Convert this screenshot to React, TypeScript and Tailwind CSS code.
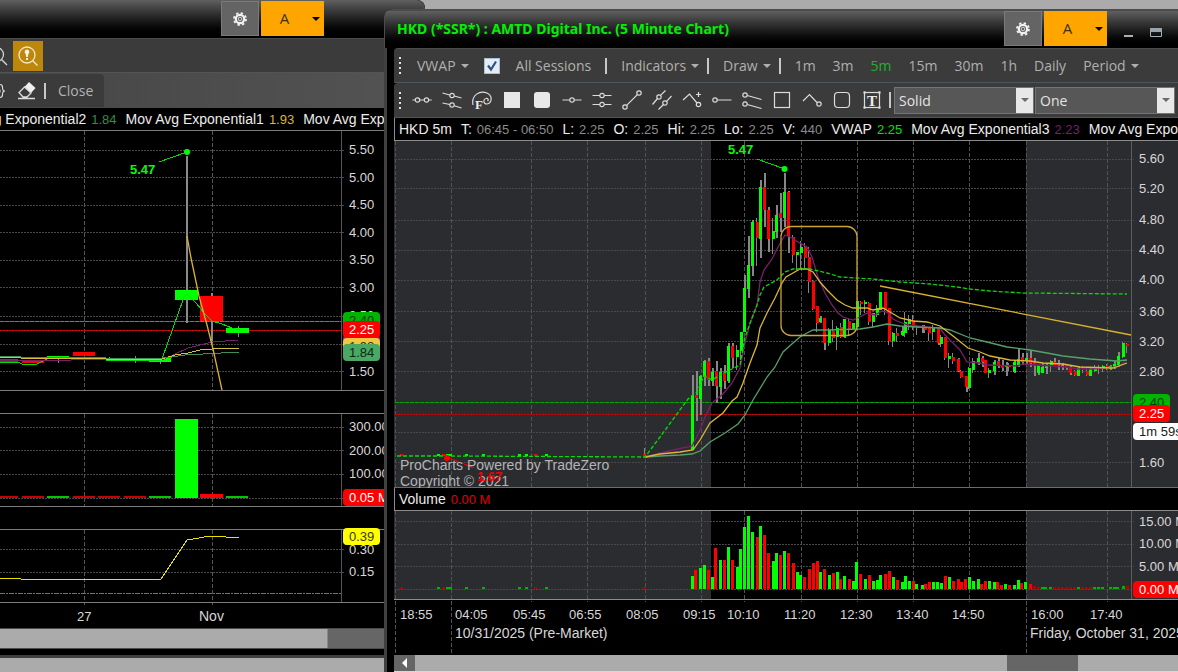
import type { ReactNode } from "react";

type Tone = "g" | "r";
type Candle = [number, number, number, number, number, Tone];

const GREEN = "#00ff00";
const RED = "#ff0000";
const fillOf = (t: Tone) => (t === "g" ? GREEN : RED);

/* x, wick top, wick bottom, body top, body bottom, direction */
const candles: Candle[] = [
  [692, 375, 450, 395, 450, "g"], [696, 371, 421, 395, 398, "r"], [700, 375, 415, 376, 399, "g"],
  [704, 360, 386, 361, 377, "g"], [708, 358, 386, 361, 380, "r"], [712, 368, 386, 372, 381, "g"],
  [716, 361, 403, 371, 386, "r"], [720, 368, 399, 372, 387, "g"], [724, 365, 389, 372, 381, "r"],
  [728, 343, 383, 346, 381, "g"], [732, 343, 368, 346, 358, "r"], [737, 345, 370, 350, 357, "g"],
  [741, 332, 360, 332, 351, "g"], [744, 275, 332, 288, 332, "g"], [748, 236, 298, 265, 289, "g"],
  [752, 220, 276, 222, 266, "g"], [757, 218, 266, 222, 238, "r"], [760, 180, 258, 187, 239, "g"],
  [764, 173, 227, 187, 210, "r"], [768, 207, 252, 210, 239, "r"], [773, 218, 254, 231, 239, "g"],
  [776, 205, 238, 215, 232, "g"], [780, 193, 232, 213, 218, "r"], [784, 173, 227, 192, 218, "g"],
  [788, 191, 253, 192, 236, "r"], [793, 235, 263, 237, 255, "r"], [797, 252, 270, 252, 255, "g"],
  [801, 241, 268, 247, 253, "g"], [805, 243, 269, 247, 258, "r"], [809, 247, 293, 257, 282, "r"],
  [813, 280, 310, 281, 309, "r"], [817, 306, 332, 306, 323, "r"], [820, 316, 323, 318, 322, "g"],
  [824, 318, 350, 318, 343, "r"], [829, 328, 346, 330, 343, "g"], [833, 320, 342, 331, 338, "r"],
  [837, 326, 350, 328, 337, "g"], [841, 323, 338, 327, 337, "r"], [844, 319, 338, 319, 337, "g"],
  [849, 319, 335, 321, 330, "r"], [853, 323, 330, 323, 329, "g"], [857, 301, 327, 301, 327, "g"],
  [861, 301, 315, 302, 304, "r"], [865, 300, 313, 302, 304, "g"], [869, 302, 325, 303, 322, "r"],
  [873, 313, 327, 313, 322, "g"], [877, 305, 317, 308, 315, "g"], [880, 292, 310, 292, 310, "g"],
  [885, 292, 315, 292, 310, "r"], [889, 308, 345, 308, 341, "r"], [893, 332, 347, 333, 341, "g"],
  [897, 328, 342, 333, 336, "r"], [902, 326, 336, 331, 335, "g"], [905, 312, 337, 322, 333, "g"],
  [909, 315, 330, 319, 324, "g"], [913, 315, 330, 320, 327, "r"], [917, 325, 335, 327, 328, "r"],
  [922, 325, 333, 327, 328, "g"], [925, 325, 333, 327, 330, "r"], [929, 327, 341, 328, 333, "r"],
  [933, 325, 340, 327, 332, "g"], [938, 328, 345, 328, 343, "r"], [941, 335, 347, 337, 344, "g"],
  [945, 337, 360, 337, 358, "r"], [949, 353, 368, 356, 359, "g"], [953, 353, 364, 357, 361, "r"],
  [958, 358, 372, 359, 371, "r"], [961, 370, 378, 371, 377, "r"], [966, 376, 392, 376, 387, "r"],
  [969, 367, 389, 368, 388, "g"], [973, 358, 373, 361, 370, "g"], [978, 353, 365, 358, 363, "g"],
  [982, 356, 367, 358, 362, "r"], [985, 360, 373, 360, 373, "r"], [989, 368, 378, 370, 373, "g"],
  [994, 360, 375, 362, 371, "g"], [998, 358, 368, 361, 365, "r"], [1002, 360, 371, 365, 368, "r"],
  [1006, 362, 376, 365, 367, "g"], [1009, 363, 371, 365, 367, "r"], [1014, 360, 373, 362, 372, "g"],
  [1018, 348, 367, 359, 365, "g"], [1022, 353, 365, 357, 362, "r"], [1026, 353, 365, 358, 360, "g"],
  [1030, 350, 367, 358, 363, "r"], [1034, 358, 376, 362, 366, "r"], [1038, 365, 375, 365, 373, "g"],
  [1042, 363, 373, 367, 373, "g"], [1046, 363, 374, 366, 368, "g"], [1051, 360, 372, 361, 365, "g"],
  [1054, 358, 365, 362, 365, "r"], [1058, 360, 370, 363, 365, "r"], [1062, 363, 370, 365, 367, "g"],
  [1066, 364, 370, 365, 368, "r"], [1070, 365, 375, 367, 373, "r"], [1075, 370, 376, 371, 375, "r"],
  [1078, 367, 376, 368, 376, "g"], [1083, 366, 373, 368, 370, "r"], [1087, 368, 376, 371, 375, "r"],
  [1090, 367, 376, 368, 376, "g"], [1095, 365, 372, 367, 371, "g"], [1099, 365, 374, 367, 369, "g"],
  [1103, 365, 372, 366, 369, "g"], [1107, 364, 370, 366, 368, "r"], [1110, 365, 370, 366, 369, "g"],
  [1114, 361, 369, 364, 368, "g"], [1118, 352, 367, 356, 365, "g"], [1123, 342, 358, 343, 357, "g"],
  [1127, 343, 353, 344, 346, "r"],
];

/* x, bar height, direction */
const volumes: [number, number, Tone][] = [
  [692, 13, "g"], [695, 19, "r"], [700, 21, "g"], [704, 24, "g"], [708, 19, "r"], [712, 12, "g"],
  [715, 41, "r"], [720, 29, "g"], [724, 29, "r"], [728, 42, "g"], [732, 29, "r"], [737, 22, "g"],
  [740, 40, "g"], [744, 62, "g"], [748, 73, "g"], [752, 57, "g"], [757, 52, "r"], [760, 63, "g"],
  [764, 54, "r"], [768, 36, "r"], [773, 28, "g"], [776, 36, "g"], [780, 34, "r"], [784, 38, "g"],
  [788, 36, "r"], [793, 26, "r"], [797, 17, "g"], [800, 14, "g"], [804, 12, "r"], [809, 20, "r"],
  [813, 26, "r"], [817, 28, "r"], [820, 17, "g"], [824, 20, "r"], [829, 14, "g"], [833, 16, "r"],
  [837, 17, "g"], [840, 10, "r"], [844, 13, "g"], [849, 10, "r"], [853, 8, "g"], [856, 27, "g"],
  [860, 15, "r"], [865, 10, "g"], [869, 14, "r"], [873, 8, "g"], [877, 9, "g"], [880, 14, "g"],
  [885, 15, "r"], [889, 18, "r"], [893, 12, "g"], [897, 9, "r"], [902, 7, "g"], [905, 13, "g"],
  [909, 8, "g"], [913, 8, "r"], [916, 5, "g"], [922, 4, "g"], [925, 5, "r"], [929, 7, "r"],
  [933, 7, "g"], [937, 7, "g"], [941, 6, "g"], [945, 13, "r"], [949, 12, "g"], [953, 8, "r"],
  [958, 10, "r"], [961, 7, "r"], [965, 10, "r"], [969, 12, "g"], [973, 8, "g"], [978, 10, "g"],
  [981, 5, "r"], [985, 8, "r"], [989, 8, "g"], [994, 7, "g"], [997, 7, "r"], [1001, 4, "r"],
  [1005, 5, "g"], [1009, 4, "r"], [1014, 4, "g"], [1018, 9, "g"], [1021, 6, "r"], [1025, 7, "g"],
  [1030, 5, "r"], [1034, 3, "r"], [1038, 2, "r"], [1042, 2, "g"], [1045, 2, "g"], [1050, 2, "g"],
  [1054, 2, "r"], [1058, 2, "r"], [1062, 2, "r"], [1066, 2, "r"], [1070, 2, "r"], [1074, 2, "r"],
  [1078, 2, "g"], [1082, 2, "r"], [1086, 2, "r"], [1090, 2, "r"], [1094, 2, "g"], [1098, 2, "g"],
  [1102, 2, "g"], [1110, 2, "g"], [1114, 2, "g"], [1117, 2, "g"], [1123, 3, "g"], [1127, 3, "r"],
];

/* sparse pre-market prints */
const prints: [number, Tone][] = [
  [401, "r"], [438, "g"], [443, "r"], [447, "g"], [450, "g"], [466, "g"], [483, "g"],
  [519, "g"], [526, "g"], [535, "r"], [546, "g"], [644, "r"],
];

const emaFast =
  "645,457 660,453 692,446 700,430 705,417 712,403 723,394 732,383 740,368 745,343 750,323 757,305 760,282 764,270 772,259 778,247 785,235 792,238 798,242 807,247 812,257 818,277 825,293 832,305 838,313 843,317 853,320 860,317 867,313 875,315 882,311 887,312 893,319 897,321 908,325 917,326 927,327 940,328 945,335 952,342 960,350 967,362 980,363 987,365 1017,366 1023,364 1037,365 1067,367 1077,369 1090,369 1117,367 1127,360";
const emaMid =
  "645,457 660,454 680,452 693,450 700,440 710,423 723,413 732,401 737,397 743,383 750,363 757,345 760,328 767,313 775,298 782,283 786,277 793,273 800,269 807,269 813,272 820,282 827,290 837,300 845,305 853,308 867,308 873,310 883,308 890,312 900,318 913,321 927,322 940,326 953,336 968,348 980,352 990,356 1010,360 1030,361 1043,363 1063,364 1080,367 1113,368 1127,363";
const emaSlow =
  "645,457 660,456 680,455 692,454 700,451 710,442 725,433 738,424 745,415 753,400 767,377 775,367 783,352 793,343 800,337 807,333 813,330 827,330 860,329 873,327 887,324 900,326 917,327 940,328 950,330 970,338 987,342 1007,347 1030,350 1047,353 1063,356 1090,359 1117,361 1127,360";
const vwap =
  "397,456 450,456 645,457 660,437 688,399 697,392 704,376 712,380 722,374 728,371 740,365 745,337 752,318 757,305 760,295 764,287 777,280 785,272 793,269 810,269 827,273 840,277 873,279 900,282 930,284 957,287 970,289 990,291 1023,293 1127,294";

const timeLines = [451, 531, 587, 645, 701, 744, 801, 857, 913, 969, 1026, 1107];

function Tag({ x, y, w, fill, ink, children }: { x: number; y: number; w: number; fill: string; ink: string; children: string }) {
  return (
    <g>
      <rect x={x} y={y} width={w} height={17} rx={4} fill={fill} />
      <text x={x + 6} y={y + 13} fill={ink}>{children}</text>
    </g>
  );
}

function GridH({ ys, x1, x2, color }: { ys: number[]; x1: number; x2: number; color: string }) {
  return (
    <g stroke={color} strokeDasharray="2 1" shapeRendering="crispEdges">
      {ys.map((y) => <line key={y} x1={x1} x2={x2} y1={y + 0.5} y2={y + 0.5} />)}
    </g>
  );
}

function GridV({ xs, y1, y2, color }: { xs: number[]; y1: number; y2: number; color: string }) {
  return (
    <g stroke={color} strokeDasharray="4 2" shapeRendering="crispEdges">
      {xs.map((x) => <line key={x} x1={x + 0.5} x2={x + 0.5} y1={y1} y2={y2} />)}
    </g>
  );
}

function LevelLine({ x1, x2, y, base, dash, pattern }: { x1: number; x2: number; y: number; base: string; dash: string; pattern: string }) {
  return (
    <g shapeRendering="crispEdges">
      <line x1={x1} x2={x2} y1={y + 0.5} y2={y + 0.5} stroke={base} />
      <line x1={x1} x2={x2} y1={y + 0.5} y2={y + 0.5} stroke={dash} strokeDasharray={pattern} />
    </g>
  );
}

function DailyChart() {
  return (
    <svg viewBox="0 130 384 498" preserveAspectRatio="xMinYMin meet" className="block h-[498px] w-full bg-black text-[13px]" role="img" aria-label="Daily chart">
      <GridH ys={[150, 177, 205, 232, 260, 287, 316, 344, 371, 427, 450, 474, 498, 549, 572]} x1={0} x2={344} color="#484848" />
      <GridV xs={[84, 212]} y1={131} y2={390} color="#565656" />
      <GridV xs={[84, 212]} y1={414} y2={506} color="#565656" />
      <GridV xs={[84, 212]} y1={530} y2={605} color="#565656" />
      <LevelLine x1={0} x2={341} y={321} base="#005800" dash="#00c800" pattern="4 1" />
      <LevelLine x1={0} x2={341} y={330} base="#500000" dash="#f00000" pattern="2 1" />
      <g shapeRendering="crispEdges" fill="none">
        <line x1={0} x2={341} y1={593.5} y2={593.5} stroke="#707070" strokeDasharray="5 1 2 1" />
        {[130.5, 390.5, 413.5, 506.5, 529.5, 602.5].map((y) => <line key={y} x1={0} x2={384} y1={y} y2={y} stroke="#7c7c7c" />)}
        <line x1={341.5} x2={341.5} y1={131} y2={390} stroke="#555" />
        <line x1={341.5} x2={341.5} y1={414} y2={506} stroke="#555" />
        <line x1={341.5} x2={341.5} y1={530} y2={602} stroke="#555" />
        <g fill="#8a8a8a">
          <rect x={186} y={156} width={2} height={167} />
          <rect x={211} y={293} width={2} height={50} />
          <rect x={238} y={326} width={1} height={11} />
          <rect x={58} y={357} width={1} height={6} /><rect x={109} y={357} width={1} height={3} />
          <rect x={135} y={356} width={1} height={7} /><rect x={160} y={358} width={1} height={6} />
        </g>
        <rect x={0} y={359} width={18} height={3} fill={RED} />
        <rect x={22} y={360} width={22} height={3} fill={RED} />
        <rect x={47} y={356} width={22} height={3} fill={GREEN} />
        <rect x={73} y={352} width={22} height={4} fill={RED} />
        <rect x={149} y={358} width={22} height={4} fill={GREEN} />
        <rect x={175} y={290} width={23} height={10} fill={GREEN} />
        <rect x={200} y={296} width={23} height={25} fill={RED} />
        <rect x={226} y={328} width={23} height={5} fill={GREEN} />
        <polyline points="0,362 20,363 22,364 37,364 45,360 48,358 72,357 90,357 106,360 160,360 162,359 184,297 187,294 196,303 205,314 212,321 222,324 232,328 240,330" stroke="#00e000" />
        <polyline points="0,360 71,360 72,359 105,359 162,360 175,354 188,348 200,345 212,342 238,340" stroke="#7a1e6c" />
        <polyline points="0,357 20,357 21,358 105,358 106,359 162,359 175,355 188,353 200,350 212,349 239,348" stroke="#d8c040" />
        <polyline points="0,356 20,356 21,357 90,357 106,358 162,358 172,357 185,355 239,352" stroke="#3f8f52" />
        <line x1={159} y1={162} x2={184} y2={153} stroke="#00d800" />
        {([[0, "r"], [22, "r"], [47, "g"], [73, "r"], [98, "r"], [124, "r"], [149, "g"], [226, "g"]] as [number, Tone][]).map(([x, t]) => (
          <rect key={x} x={x} y={496} width={x === 0 ? 18 : 22} height={2} fill={t === "g" ? "#00c800" : "#c80000"} />
        ))}
        <rect x={175} y={419} width={23} height={79} fill={GREEN} />
        <rect x={200} y={494} width={23} height={4} fill={RED} />
        <polyline points="0,578 20,578 21,579 161,579 187,540 199,538 210,536 224,536 226,537 239,537" stroke="#e8e000" />
      </g>
      <polyline points="187,236 191,258 199,296 207,325 213,349 222,390" fill="none" stroke="#d9b22e" strokeWidth={1.3} />
      <circle cx={187} cy={152} r={3} fill={GREEN} />
      <text x={130} y={174} fill={GREEN} className="font-bold">5.47</text>
      <g fill="#d8d8d8">
        <text x={349} y={154}>5.50</text><text x={349} y={182}>5.00</text><text x={349} y={209}>4.50</text>
        <text x={349} y={237}>4.00</text><text x={349} y={264}>3.50</text><text x={349} y={292}>3.00</text>
        <text x={349} y={320}>2.50</text><text x={349} y={376}>1.50</text>
        <text x={349} y={431}>300.00 M</text><text x={349} y={455}>200.00 M</text><text x={349} y={478}>100.00 M</text>
        <text x={349} y={554}>0.30</text><text x={349} y={576}>0.15</text>
        <text x={77} y={621}>27</text><text x={199} y={621} className="text-[14px]">Nov</text>
      </g>
      <Tag x={343} y={312} w={37} fill="#00b400" ink="#0a3c0a">2.40</Tag>
      <rect x={343} y={335} width={37} height={17} rx={4} fill="#8a2a7c" />
      <Tag x={343} y={338} w={37} fill="#f0c840" ink="#3a3000">1.93</Tag>
      <Tag x={343} y={321} w={37} fill={RED} ink="#ffffff">2.25</Tag>
      <Tag x={343} y={344} w={37} fill="#4aa864" ink="#062c10">1.84</Tag>
      <Tag x={343} y={489} w={60} fill={RED} ink="#ffffff">0.05 M</Tag>
      <Tag x={343} y={528} w={37} fill="#ffff00" ink="#3a3a00">0.39</Tag>
    </svg>
  );
}

function PriceChart() {
  return (
    <svg viewBox="394 140 784 348" preserveAspectRatio="xMinYMin meet" className="block h-[348px] w-full bg-[#2b2c30] text-[13px]" role="img" aria-label="Price chart">
      <rect x={711} y={140} width={315} height={348} fill="#000" />
      <GridH ys={[159, 188, 220, 250, 280, 311, 341, 371, 432, 462]} x1={395} x2={1134} color="#47484a" />
      <GridV xs={[395, ...timeLines]} y1={141} y2={487} color="#515254" />
      <LevelLine x1={395} x2={1131} y={402} base="#0a500c" dash="#00a800" pattern="4 1" />
      <LevelLine x1={395} x2={1131} y={414} base="#4c1416" dash="#d80000" pattern="2 1" />
      <g shapeRendering="crispEdges" fill="none">
        <line x1={1131.5} x2={1131.5} y1={141} y2={487} stroke="#5c5c5c" />
        <line x1={394} x2={1178} y1={140.5} y2={140.5} stroke="#8c8c8c" />
        <line x1={394} x2={1178} y1={487.5} y2={487.5} stroke="#6c6c6c" />
        <rect x={644} y={448} width={1} height={7} fill="#8a8a8a" />
        {prints.map(([x, t]) => <rect key={x} x={x - 1} y={454} width={3} height={2} fill={fillOf(t)} />)}
        {candles.map(([x, a, b]) => <rect key={x} x={x - (x % 2)} y={a} width={x % 2 ? 1 : 2} height={b - a} fill="#868686" />)}
        {candles.map(([x, , , c, d, t]) => <rect key={x} x={x - 1} y={c} width={3} height={Math.max(1, d - c)} fill={fillOf(t)} />)}
        <line x1={757} y1={159} x2={782} y2={168} stroke="#00d800" />
        <line x1={449} y1={458} x2={474} y2={468} stroke="#e00000" />
      </g>
      <g fill="none" strokeWidth={1.3}>
        <polyline points={emaFast} stroke="#7a1e6c" />
        <polyline points={emaSlow} stroke="#57a06c" />
        <polyline points={emaMid} stroke="#dcb636" />
        <polyline points={vwap} stroke="#00e000" strokeDasharray="4 2" />
        <line x1={880} y1={286} x2={1131} y2={335} stroke="#d9b22e" />
        <rect x={781} y={226.5} width={76} height={109} rx={10} stroke="#c9a432" />
      </g>
      <circle cx={784.5} cy={169} r={3} fill={GREEN} />
      <circle cx={447} cy={458} r={3} fill={RED} />
      <text x={728} y={154} fill={GREEN} className="font-bold">5.47</text>
      <g fill="#b4b4b4" className="text-[14px]">
        <text x={400} y={470}>ProCharts Powered by TradeZero</text>
        <text x={400} y={486}>Copyright © 2021</text>
      </g>
      <text x={477} y={481} fill="#f00000" className="font-bold">1.67</text>
      <g fill="#d8d8d8">
        {([[163, "5.60"], [193, "5.20"], [224, "4.80"], [254, "4.40"], [284, "4.00"], [316, "3.60"], [346, "3.20"], [376, "2.80"], [467, "1.60"]] as [number, string][]).map(([y, s]) => (
          <text key={s} x={1139} y={y}>{s}</text>
        ))}
      </g>
      <Tag x={1133} y={394} w={37} fill="#00b400" ink="#0a3c0a">2.40</Tag>
      <Tag x={1133} y={405} w={37} fill={RED} ink="#ffffff">2.25</Tag>
      <Tag x={1133} y={423} w={60} fill="#ffffff" ink="#202020">1m 59s</Tag>
    </svg>
  );
}

function VolumeChart() {
  return (
    <svg viewBox="394 510 784 145" preserveAspectRatio="xMinYMin meet" className="block h-[145px] w-full bg-black text-[13px]" role="img" aria-label="Volume chart">
      <rect x={394} y={510} width={317} height={89} fill="#2b2c30" />
      <rect x={1026} y={510} width={152} height={89} fill="#2b2c30" />
      <GridH ys={[521, 544, 566, 589]} x1={395} x2={1134} color="#47484a" />
      <GridV xs={timeLines} y1={511} y2={602} color="#515254" />
      <GridV xs={[395, 451, 1026]} y1={511} y2={655} color="#515254" />
      <g shapeRendering="crispEdges">
        <line x1={1131.5} x2={1131.5} y1={511} y2={599} stroke="#5c5c5c" />
        <line x1={394} x2={1178} y1={510.5} y2={510.5} stroke="#8c8c8c" />
        <line x1={394} x2={1178} y1={599.5} y2={599.5} stroke="#8c8c8c" />
        {prints.map(([x, t]) => <rect key={x} x={x - 1} y={587} width={3} height={2} fill={t === "g" ? "#00b400" : "#b40000"} />)}
        {volumes.map(([x, h, t]) => (
          <rect key={x} x={x - 1} y={589 - h} width={3} height={h} fill={h < 4 ? (t === "g" ? "#00b400" : "#b40000") : fillOf(t)} />
        ))}
      </g>
      <g fill="#d8d8d8">
        <text x={1139} y={526}>15.00 M</text><text x={1139} y={548}>10.00 M</text><text x={1139} y={571}>5.00 M</text>
        {([[400, "18:55"], [455, "04:05"], [513, "05:45"], [569, "06:55"], [626, "08:05"], [683, "09:15"], [727, "10:10"], [784, "11:20"], [840, "12:30"], [896, "13:40"], [952, "14:50"], [1031, "16:00"], [1090, "17:40"]] as [number, string][]).map(([x, s]) => (
          <text key={s} x={x} y={619}>{s}</text>
        ))}
        <g className="text-[14px]">
          <text x={455} y={638}>10/31/2025 (Pre-Market)</text>
          <text x={1030} y={638}>Friday, October 31, 2025</text>
        </g>
      </g>
      <Tag x={1133} y={581} w={60} fill={RED} ink="#ffffff">0.00 M</Tag>
    </svg>
  );
}

function Gear() {
  return (
    <svg viewBox="-10 -10 20 20" className="size-5" fill="none" stroke="#f2f2f2" aria-hidden="true">
      <circle r={4.2} strokeWidth={2.2} />
      <circle r={1.8} strokeWidth={1} stroke="#d0d0d0" />
      <circle r={6} strokeWidth={1.8} strokeDasharray="2.36 2.35" />
    </svg>
  );
}

function Caret({ className = "" }: { className?: string }) {
  return (
    <svg viewBox="0 0 8 4" className={`h-1 w-2 ${className}`} fill="currentColor" aria-hidden="true">
      <path d="M0 0h8L4 4z" />
    </svg>
  );
}

function AccountControls() {
  return (
    <div className="flex gap-0.5">
      <button type="button" aria-label="Settings" className="flex h-[35px] w-[38px] items-center justify-center border border-[#7a7a7a] bg-[#646464]">
        <Gear />
      </button>
      <button type="button" className="relative h-[35px] w-[63px] bg-[#ffa500] pr-4 text-[15px] text-[#3c3208]">
        A
        <Caret className="absolute top-4 right-1 text-black" />
      </button>
    </div>
  );
}

function Sep() {
  return <span className="h-4 w-0.5 shrink-0 bg-[#c4c8cc]" />;
}

function Grip() {
  return (
    <span className="flex w-1 shrink-0 flex-col gap-[3px]" aria-hidden="true">
      {[0, 1, 2, 3].map((i) => <i key={i} className="size-0.5 bg-[#e4e4e4]" />)}
    </span>
  );
}

function MenuButton({ children }: { children: ReactNode }) {
  return (
    <button type="button" className="flex items-center gap-[5px]">
      {children}
      <Caret />
    </button>
  );
}

const tools: { name: string; art: ReactNode }[] = [
  { name: "Segment", art: <><circle cx={-4.5} r={2.2} /><circle cx={4.5} r={2.2} /><path d="M-9.5 0h3M-2.3 0h4.6M6.7 0h3" /></> },
  { name: "Parallel rays", art: <><circle cy={-4.5} r={2.2} /><circle cy={5} r={2.2} /><path d="M-9.5-7l7.3 2M2.2-4L9.5-2M-9.5 3l7.3 1.5M2.2 5.8L9.5 8" /></> },
  { name: "Fibonacci", art: <><path d="M-9 5C-11-5-2-10 5-7C11-4 10 3 5 4C1 4 1-1 4-1.500C6-2 7 0 5.500 1" /><text x={-7} y={9} fontSize={13} fill="#ececec" stroke="none" className="font-bold [font-family:'Liberation_Serif',serif]">F</text></> },
  { name: "Filled rectangle", art: <rect x={-8} y={-8} width={16} height={16} fill="#e8e8e8" stroke="none" /> },
  { name: "Filled rounded rectangle", art: <rect x={-8} y={-8} width={16} height={16} rx={3} fill="#e8e8e8" stroke="none" /> },
  { name: "Horizontal line", art: <><circle r={2.2} /><path d="M-9.500 0h7.300M2.200 0h7.300" /></> },
  { name: "Horizontal channel", art: <><circle cy={-4.5} r={2.2} /><circle cy={4.5} r={2.2} /><path d="M-9.500-4.500h7.300M2.200-4.500h7.300M-9.500 4.500h7.300M2.200 4.500h7.300" /></> },
  { name: "Trend line", art: <><circle cx={-7} cy={7} r={2.2} /><circle cx={7} cy={-7} r={2.2} /><path d="M-5.400 5.400L5.400-5.400" /></> },
  { name: "Channel", art: <><circle cx={-3} cy={-3} r={2.2} /><circle cx={3} cy={3} r={2.2} /><path d="M-9.500 4.500l5-6M-1.500-4.600L3.500-9.500M-3.500 9.500l5-5M4.600 1.400L9.500-4" /></> },
  { name: "Add polyline", art: <><path d="M-9 0L-2.500-6L5 3M6.500-8v5M4-5.500h5" /><circle cx={6.5} cy={4.5} r={2.2} /></> },
  { name: "Ray", art: <><circle cx={-7} r={2.2} /><path d="M-4.800 0H9.500" /></> },
  { name: "Pitch rays", art: <><circle cx={-7} cy={-5} r={2.2} /><circle cx={-7} cy={4} r={2.2} /><path d="M-4.800-4.500L9.500-.5M-4.800 4.500L9.500 8.500" /></> },
  { name: "Rectangle", art: <rect x={-7.5} y={-7.5} width={15} height={15} /> },
  { name: "Polyline", art: <><path d="M-9 1L-2.500-5.500L5 2.500" /><circle cx={7} cy={4} r={2.2} /></> },
  { name: "Rounded rectangle", art: <rect x={-7.5} y={-7.5} width={15} height={15} rx={3.5} /> },
  { name: "Text", art: <><rect x={-7.500} y={-7.500} width={15} height={15} /><path d="M-8.500-7.500h2M6.500-7.500h2M-8.500 7.500h2M6.500 7.500h2" strokeWidth={2.600} /><text x={-5} y={5.500} fontSize={15} fill="#ececec" stroke="none" className="font-bold [font-family:'Liberation_Serif',serif]">T</text></> },
];

function StyleSelect({ label, options }: { label: string; options: string[] }) {
  return (
    <label className="relative block w-[140px] shrink-0">
      <span className="sr-only">{label}</span>
      <select className="block h-[27px] w-full appearance-none border border-[#747474] bg-[#575757] pl-1 text-[14px] text-[#e4e4e4]">
        {options.map((o) => <option key={o}>{o}</option>)}
      </select>
      <span className="pointer-events-none absolute inset-y-px right-px flex w-[17px] items-center justify-center bg-[#e8e8e8] text-[#6a6a6a]">
        <Caret />
      </span>
    </label>
  );
}

function Reading({ name, value, tone = "text-[#8c8c8c]" }: { name: string; value?: string; tone?: string }) {
  return (
    <span className="flex shrink-0 items-baseline gap-[5px]">
      <span className="text-[14px] text-[#ececec]">{name}</span>
      {value && <span className={`text-[13px] ${tone}`}>{value}</span>}
    </span>
  );
}

function DailyWindow() {
  return (
    <section className="absolute inset-y-0 left-0 w-[425px] overflow-hidden rounded-tr-lg bg-black">
      <header className="flex h-[38px] justify-end rounded-tr-lg border-r-2 border-[#4c4c4c] bg-linear-to-b from-[#606060] to-black pt-px pr-[99px]">
        <AccountControls />
      </header>
      <div className="w-[387px] border-r-[3px] border-[#414141]">
        <div className="flex h-[35px] items-center gap-[5px] overflow-hidden border-t border-b border-t-[#4c4c4c] border-b-[#50555a] bg-[#3b3b3b]">
          <button type="button" aria-label="Zoom" className="-ml-3">
            <svg viewBox="0 0 20 20" className="size-5" fill="none" stroke="#dcdcdc" strokeWidth={1.200} aria-hidden="true"><circle cx={8.500} cy={8.500} r={7} /><path d="M13.500 13.500L19 19" /></svg>
          </button>
          <button type="button" aria-label="Zoom to data" className="flex size-[30px] items-center justify-center bg-[#bd870c]">
            <svg viewBox="0 0 20 20" className="size-5" fill="none" stroke="#f0e8d0" strokeWidth={1.300} aria-hidden="true"><circle cx={9} cy={9} r={8} /><path d="M14.700 14.700L19.500 19.500" /><path d="M9 3.500a2.400 2.400 0 0 1 1.300 4.400L9.800 11H8.200L7.700 7.900A2.400 2.400 0 0 1 9 3.500zM8 12h2v2H8z" fill="#f6f2e6" stroke="none" /></svg>
          </button>
        </div>
        <div className="flex h-[35px] bg-linear-to-r from-[#464646] to-[#525252] py-px">
          <div className="flex w-[104px] items-center overflow-hidden rounded-tr-sm bg-[#3b3b3b]">
            <button type="button" aria-label="Options" className="-ml-3">
              <svg viewBox="-9 -9 18 18" className="size-[18px]" fill="none" stroke="#d8d8d8" strokeWidth={1.200} aria-hidden="true"><path d="M3-6.500C5-6.500 5.500-5.500 5.500-3.500S6 0 8 0C6 0 5.500 1.500 5.500 3.500S5 6.500 3 6.500M-3-6.500C-5-6.500-5.500-5.500-5.500-3.500S-6 0-8 0C-6 0-5.500 1.500-5.500 3.500S-5 6.500-3 6.500" /><circle r={3} /></svg>
            </button>
            <button type="button" aria-label="Erase" className="ml-3">
              <svg viewBox="0 0 18 18" className="size-[18px]" aria-hidden="true"><path d="M11 0l6.500 6-4.500 5-6.500-6z" fill="#f0f0f0" /><path d="M6.500 5L1 10.500 5 15h4l4-4z M0 16.500h17" fill="none" stroke="#dcdcdc" strokeWidth={1.300} /></svg>
            </button>
            <span className="ml-2 flex items-center gap-3"><Sep /><button type="button" className="text-[14px] text-[#b4b4b4]">Close</button></span>
          </div>
        </div>
        <div className="flex h-[22px] items-center justify-start overflow-hidden bg-black [font-family:'Liberation_Sans',Arial,sans-serif] whitespace-nowrap">
          <div className="-ml-[52px] flex gap-[9px]">
            <Reading name="Mov Avg Exponential2" value="1.84" tone="text-[#2f8f46]" />
            <Reading name="Mov Avg Exponential1" value="1.93" tone="text-[#dcb634]" />
            <Reading name="Mov Avg Exponential3" />
          </div>
        </div>
        <div className="[font-family:'Liberation_Sans',Arial,sans-serif]"><DailyChart /></div>
        <div className="flex h-[21px] border-y border-[#4c4c4c] bg-[#666]"><div className="w-[328px] border-r border-[#888] bg-[#ababab]" /></div>
        <div className="h-1.5 bg-black" />
        <div className="h-[17px] border-t-[3px] border-[#3f3f3f] bg-[#ababab]" />
      </div>
    </section>
  );
}

function IntradayWindow() {
  return (
    <section className="absolute top-[9px] right-0 left-[384px] overflow-hidden rounded-tl-lg bg-black">
      <header className="flex h-[39px] items-start justify-between border-t-2 border-l border-[#4c4c4c] bg-linear-to-b from-[#606060] to-black pl-3">
        <h1 className="pt-2 [font-family:'Noto_Sans','Open_Sans',sans-serif] text-[14px] leading-5 font-bold whitespace-nowrap text-[#00f000]">HKD (*SSR*) : AMTD Digital Inc. (5 Minute Chart)</h1>
        <div className="flex">
          <AccountControls />
          <div className="-mr-[11px] ml-[17px] flex items-end gap-[17px] pb-[9px]">
            <button type="button" aria-label="Minimize"><svg viewBox="0 0 9 12" className="block h-3 w-[9px]" aria-hidden="true"><path d="M0 10h9v2H0z" fill="#b0b0b0" /></svg></button>
            <button type="button" aria-label="Maximize"><svg viewBox="0 0 12 9" className="block h-[9px] w-3" fill="none" aria-hidden="true"><path d="M.5.5h11v8H.5z" stroke="#a8b0b8" /><path d="M0 0h12v4H0z" fill="#9aa2aa" /></svg></button>
            <button type="button" aria-label="Close window"><svg viewBox="0 0 10 10" className="block size-2.5" stroke="#b0b0b0" strokeWidth={2} aria-hidden="true"><path d="M1 1l8 8M9 1L1 9" /></svg></button>
          </div>
        </div>
      </header>
      <div className="border-l-[3px] border-[#414141] pl-[7px]">
        <nav className="flex h-[35px] items-center gap-[17px] overflow-hidden rounded-tl-sm border-t border-b border-t-[#4c4c4c] border-b-[#50555a] bg-[#3b3b3b] pl-[5px] text-[14px] whitespace-nowrap text-[#b0b0b0]">
          <span className="flex items-center gap-[14px]"><Grip /><MenuButton>VWAP</MenuButton></span>
          <span className="-ml-0.5 flex items-center gap-[14px]">
            <label className="flex items-center gap-4">
              <span className="relative block size-4">
                <input type="checkbox" defaultChecked className="block size-4 appearance-none border border-[#a8c0d8] bg-[#e6ecf2]" />
                <svg viewBox="0 0 16 16" className="pointer-events-none absolute inset-0 size-4" fill="none" stroke="#2c5488" strokeWidth={2.200} aria-hidden="true"><path d="M4 7.500L7 11.500 12 3.500" /></svg>
              </span>
              All Sessions
            </label>
            <Sep />
            <span className="flex items-center gap-2"><MenuButton>Indicators</MenuButton><Sep /></span>
            <span className="flex items-center gap-2"><MenuButton>Draw</MenuButton><Sep /></span>
            <button type="button">1m</button>
          </span>
          <button type="button">3m</button>
          <button type="button" className="text-[#22b02e]">5m</button>
          <button type="button">15m</button>
          <button type="button">30m</button>
          <button type="button">1h</button>
          <button type="button">Daily</button>
          <MenuButton>Period</MenuButton>
        </nav>
        <div className="flex h-[35px] items-center rounded-tl-sm border-b border-[#50555a] bg-[#3b3b3b] pl-[5px]">
          <Grip />
          <div className="ml-1 flex shrink-0">
            {tools.map((t) => (
              <button key={t.name} type="button" aria-label={t.name} className="flex h-7 w-[30px] items-center justify-center">
                <svg viewBox="-10 -10 20 20" className="size-5" fill="none" stroke="#dcdcdc" strokeWidth={1.200} aria-hidden="true">{t.art}</svg>
              </button>
            ))}
          </div>
          <span className="ml-0.5 flex items-center gap-[3px]"><Sep />
            <span className="flex gap-px">
              <StyleSelect label="Line style" options={["Solid", "Dashed", "Dotted"]} />
              <StyleSelect label="Line width" options={["One", "Two", "Three"]} />
            </span>
          </span>
        </div>
        <div className="flex h-[22px] items-center gap-[9px] overflow-hidden border-l border-[#8c8c8c] bg-black pl-1 [font-family:'Liberation_Sans',Arial,sans-serif] whitespace-nowrap">
          <Reading name="HKD 5m" />
          <Reading name="T:" value="06:45 - 06:50" />
          <Reading name="L:" value="2.25" />
          <Reading name="O:" value="2.25" />
          <Reading name="Hi:" value="2.25" />
          <Reading name="Lo:" value="2.25" />
          <Reading name="V:" value="440" />
          <Reading name="VWAP" value="2.25" tone="text-[#00e000]" />
          <Reading name="Mov Avg Exponential3" value="2.23" tone="text-[#7a1e6c]" />
          <Reading name="Mov Avg Exponential2" value="1.84" tone="text-[#2f8f46]" />
        </div>
        <div className="[font-family:'Liberation_Sans',Arial,sans-serif]">
          <PriceChart />
          <div className="flex h-[22px] items-center border-l border-[#8c8c8c] bg-black pl-1">
            <Reading name="Volume" value="0.00 M" tone="text-[#e00000]" />
          </div>
          <VolumeChart />
        </div>
        <div className="flex h-[17px] border-b border-[#d8d8d8] bg-[#ababab]">
          <button type="button" aria-label="Scroll left" className="flex w-[21px] items-center justify-center bg-[#666]">
            <svg viewBox="0 0 5 10" className="h-2.5 w-[5px]" fill="#fff" aria-hidden="true"><path d="M5 0v10L0 5z" /></svg>
          </button>
          <div className="ml-[592px] w-[71px] bg-[#666]" />
        </div>
      </div>
    </section>
  );
}

export default function App() {
  return (
    <main className="relative min-h-screen overflow-hidden bg-[#ababab] [font-family:'Open_Sans','Noto_Sans',sans-serif]">
      <DailyWindow />
      <IntradayWindow />
    </main>
  );
}
